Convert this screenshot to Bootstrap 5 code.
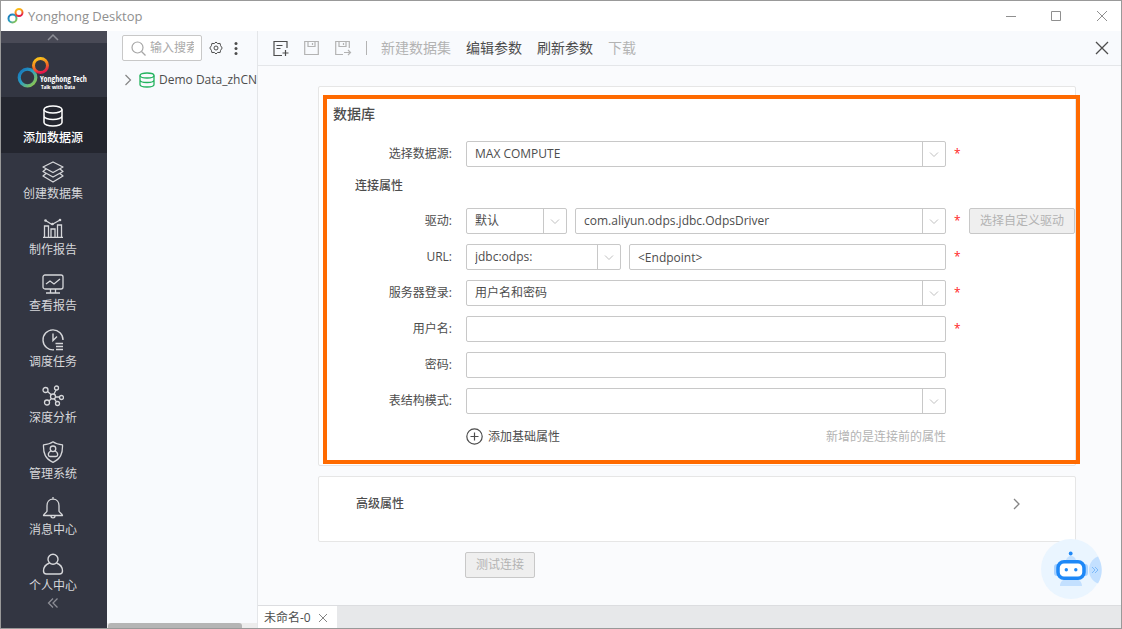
<!DOCTYPE html>
<html lang="zh-CN">
<head>
<meta charset="utf-8">
<meta name="viewport" content="width=device-width, initial-scale=1">
<title>Yonghong Desktop</title>
<link href="https://cdn.jsdelivr.net/npm/bootstrap@5.3.0/dist/css/bootstrap.min.css" rel="stylesheet">
<style>
  body { font-family: "Open Sans", "Noto Sans CJK SC", sans-serif; font-size: 12px; line-height: 20px; color: #4d4d4d; }
  svg { fill: none; stroke: currentColor; flex-shrink: 0; display: block; }
  button { font: inherit; }
  .icon-btn { border: 0; background: none; padding: 0; color: inherit; }
  .tone-gray { color: #858585; }
  .tone-green { color: #22b35e; }
  .app { border: 1px solid #999; background: #fff; }
  .titlebar { height: 30px; padding: 0 13px 0 6px; color: #8f8f8f; font-size: 13px; }
  .win-btns { gap: 33px; }

  .side { width: 106px; background: #333642; color: #d6d7da; }
  .side-up { height: 12px; background: #494a56; color: #8d8e96; padding-right: 2px; }
  .brand { height: 54px; }
  .side .nav-link { height: 56px; padding: 8px 2px 0 0; gap: 1px; color: inherit; border-radius: 0; }
  .side .nav-link.active { background: #24262f; color: #fff; font-weight: 500; }
  .side-down { color: #8d8e96; margin: -4px 2px 0 0; }

  .tree { width: 151px; background: #f8fafd; border-right: 1px solid #e4e6e9; }
  .tree-tools { padding: 4px 0 0 15px; gap: 7px; color: #4d4d4d; }
  .search { width: 80px; height: 26px; border: 1px solid #c8c8c8; border-radius: 2px; padding: 0 7px 0 8px; gap: 4px; color: #a6a6a6; background: #fff; }
  .search input { font-size: 12px; color: #4d4d4d; min-width: 0; }
  .search input::placeholder { color: #a9a9a9; opacity: 1; }
  .tree-node { padding: 9px 0 0 15px; white-space: nowrap; }
  .hscroll { height: 5px; background: #ececec; padding-left: 1px; }
  .hthumb { width: 90%; height: 5px; background: #b5b5b5; border-radius: 3px 3px 0 0; }

  .work { background: #fafbfd; }
  .toolbar { height: 35px; background: #f8fafd; border-bottom: 1px solid #e4e6e9; padding: 0 12px 0 14px; font-size: 14px; }
  .toolbar .off { color: #b3b3b3; }
  .tools-icons { gap: 15px; }
  .tools-text { gap: 15px; }
  .panes { padding: 20px 45px 0 60px; }
  .panel { background: #fff; border: 1px solid #e6e6e6; border-radius: 2px; }
  .db-panel { height: 380px; padding-top: 17px; }
  .frame { inset: 8px -5px 1px 4px; border: 4px solid #ff6a00; pointer-events: none; }
  .sec-title { font-size: 14px; font-weight: 500; margin: 0 0 17px 14px; line-height: 20px; }
  .sub-title { font-size: 12px; font-weight: 500; margin: 0 0 13px 36px; line-height: 18px; }
  .f-row { height: 26px; margin-bottom: 10px; }
  .f-label { width: 133px; margin-right: 14px; text-align: right; flex-shrink: 0; }
  .f-after { width: 129px; padding-left: 8px; flex-shrink: 0; gap: 8px; }
  .star { color: #f22; width: 7px; }
  .form-control, .form-select { height: 26px; min-height: 26px; padding: 0 8px; font-size: 12px; line-height: 24px; color: #4d4d4d; border: 1px solid #c8c8c8; border-radius: 2px; min-width: 0; }
  .form-select { padding-right: 26px; background-image: url("data:image/svg+xml,%3Csvg xmlns='http://www.w3.org/2000/svg' width='23' height='24' fill='none'%3E%3Cpath d='M.5 0v24' stroke='%23c8c8c8'/%3E%3Cpath d='M8 10.500l4 4 4-4' stroke='%23c0c0c0'/%3E%3C/svg%3E"); background-size: 23px 24px; background-position: right 0 center; }
  .w-drv { width: 101px; flex-shrink: 0; }
  .w-url { width: 155px; flex-shrink: 0; }
  .btn-off { height: 26px; border: 1px solid #c8c8c8; border-radius: 2px; background: #efefef; color: #b3b3b3; padding: 0 10px; white-space: nowrap; line-height: 24px; font-size: 12px; }
  .hint { color: #b3b3b3; }
  .adv { height: 66px; margin-top: 10px; padding: 0 53px 10px 37px; font-weight: 500; width: 100%; color: #4d4d4d; }
  .test-row { padding: 10px 0 0 147px; }
  .tabs { height: 23px; background: #e7e8ea; border-top: 1px solid #dcdde0; }
  .doc-tab { background: #fff; padding: 2px 9px 0 6px; gap: 7px; }
  .bot { right: 19px; bottom: 29px; }
  .bot svg { stroke: none; }
</style>
</head>
<body>
<svg width="0" height="0" class="position-absolute" aria-hidden="true">
  <defs>
    <linearGradient id="cool" x1="0" y1="0" x2="1" y2="1"><stop offset="0" stop-color="#1470b8"/><stop offset=".45" stop-color="#2a9fc4"/><stop offset="1" stop-color="#9ccc3c"/></linearGradient>
    <linearGradient id="warm" x1=".3" y1="0" x2=".6" y2="1"><stop offset="0" stop-color="#fbc21a"/><stop offset=".5" stop-color="#f47a20"/><stop offset="1" stop-color="#e4144c"/></linearGradient>
  </defs>
</svg>
<div class="app d-flex flex-column vh-100 overflow-hidden">
  <header class="titlebar d-flex align-items-center justify-content-between">
    <div class="d-flex align-items-center gap-1">
      <svg width="17" height="18" viewBox="0 0 17 18" stroke-width="2"><circle cx="5.500" cy="11.500" r="4" stroke="url(#cool)"/><circle cx="12" cy="5.500" r="3.500" stroke="url(#warm)"/></svg>
      <span>Yonghong Desktop</span>
    </div>
    <div class="win-btns d-flex align-items-center">
      <button class="icon-btn" aria-label="最小化"><svg width="12" height="12"><path d="M0 6.500h10"/></svg></button>
      <button class="icon-btn" aria-label="最大化"><svg width="12" height="12"><path d="M.5 1.500h9v9h-9z"/></svg></button>
      <button class="icon-btn" aria-label="关闭"><svg width="12" height="12"><path d="M1 1l10 10M11 1L1 11"/></svg></button>
    </div>
  </header>

  <div class="d-flex flex-grow-1 overflow-hidden">
    <nav class="side d-flex flex-column flex-shrink-0">
      <button class="side-up icon-btn d-flex justify-content-center align-items-center" aria-label="向上"><svg width="12" height="8" stroke-width="1.500"><path d="M1 7l5-5 5 5"/></svg></button>
      <div class="brand">
        <svg width="106" height="54" viewBox="0 0 106 54">
          <circle cx="26.500" cy="34.500" r="8.300" stroke="url(#cool)" stroke-width="3.200"/><circle cx="39.500" cy="22.500" r="7" stroke="url(#warm)" stroke-width="3"/>
          <g stroke="none" fill="#fff" font-family="Open Sans Condensed, Liberation Sans Narrow, sans-serif"><text x="39" y="39" font-size="8" font-weight="700">Yonghong Tech</text><text x="40" y="46" font-size="6">Talk with Data</text></g>
        </svg>
      </div>
      <div class="nav flex-column text-center">
        <a href="#" class="nav-link active d-flex flex-column align-items-center"><svg width="22" height="22" stroke-width="1.500"><ellipse cx="11" cy="4.500" rx="9" ry="3.500"/><path d="M2 4.500v13c0 2 4 3.500 9 3.500s9-1.500 9-3.500v-13M2 11c0 2 4 3.500 9 3.500s9-1.500 9-3.500"/></svg>添加数据源</a>
        <a href="#" class="nav-link d-flex flex-column align-items-center"><svg width="22" height="22" stroke-width="1.300" stroke-linejoin="round"><path d="M11 1l10 5-10 5.500L1 6zM4 8l-3 2.500L11 16l10-5.500L18 8M4 12.500L1 15l10 6 10-6-3-2.500"/></svg>创建数据集</a>
        <a href="#" class="nav-link d-flex flex-column align-items-center"><svg width="22" height="22" stroke-width="1.300"><path d="M1 20.300h20M2.500 20v-11h4v11M9 20v-8h4v8M15.500 20V8h4v12M3.500 3.500L10 7.500l8-4.500"/><g fill="currentColor" stroke="none"><circle cx="3.500" cy="3.500" r="1.300"/><circle cx="10.500" cy="7" r="1.300"/><circle cx="18" cy="3" r="1.300"/></g></svg>制作报告</a>
        <a href="#" class="nav-link d-flex flex-column align-items-center"><svg width="22" height="22" stroke-width="1.300"><rect x="1" y="2" width="20" height="14" rx="2"/><path d="M4 11l4-3 4 3 6-5M8.500 16v3.500M13.500 16v3.500M4 20h14"/></svg>查看报告</a>
        <a href="#" class="nav-link d-flex flex-column align-items-center"><svg width="22" height="22" stroke-width="1.400"><path d="M12 20.800A10 10 0 1 1 21 11M11 4.500v7l4-4M13.500 14.500H21M14 17.500h7M14 20.500h7"/></svg>调度任务</a>
        <a href="#" class="nav-link d-flex flex-column align-items-center"><svg width="22" height="22" stroke-width="1.300"><circle cx="11" cy="11.500" r="2.500"/><circle cx="3.500" cy="5" r="2.500"/><circle cx="14.500" cy="3" r="2"/><circle cx="19.500" cy="12.500" r="2"/><circle cx="5" cy="17.500" r="2.500"/><circle cx="15.500" cy="18.500" r="2"/><path d="M5.500 6.500l3.500 3M14 5l-2 4M13.500 12h4M9.500 13.500L7 16M12 13.500l2.500 3.300"/></svg>深度分析</a>
        <a href="#" class="nav-link d-flex flex-column align-items-center"><svg width="22" height="22" stroke-width="1.300" stroke-linejoin="round"><path d="M11 .8c3 2.200 6 2.700 9.500 3 .3 9-2 14-9.500 17.500C3.500 17.800 1.200 12.800 1.500 3.800 5 3.500 8 3 11 .8z"/><circle cx="11" cy="7.800" r="2.800"/><path d="M9 10c-2 .7-2.700 2-2.700 3.700 0 1.200.7 1.800 1.700 1.800h6c1 0 1.700-.6 1.700-1.800 0-1.700-.7-3-2.700-3.700"/></svg>管理系统</a>
        <a href="#" class="nav-link d-flex flex-column align-items-center"><svg width="22" height="22" stroke-width="1.300" stroke-linejoin="round"><path d="M11 2.200c4 0 6 3 6 6.500v5.500c1 2 3 2.300 3.500 4.300h-19c.5-2 2.500-2.300 3.500-4.300V8.700c0-3.500 2-6.500 6-6.500zM11 0v2.200M9 19c0 2.500 4 2.500 4 0"/></svg>消息中心</a>
        <a href="#" class="nav-link d-flex flex-column align-items-center"><svg width="22" height="22" stroke-width="1.400"><circle cx="11" cy="6.200" r="5"/><path d="M7.500 10c-4 1.500-6 4-6 8 0 2 1 3 3 3h13c2 0 3-1 3-3 0-4-2-6.500-6-8"/></svg>个人中心</a>
      </div>
      <button class="side-down icon-btn align-self-center" aria-label="收起"><svg width="12" height="12" viewBox="0 0 12 12" stroke-width="1.300"><path d="M6 1.500L1.500 6 6 10.500M10.500 1.500L6 6l4.500 4.500"/></svg></button>
    </nav>

    <aside class="tree d-flex flex-column flex-shrink-0">
      <div class="tree-tools d-flex align-items-center">
        <label class="search d-flex align-items-center"><svg width="15" height="15" stroke-width="1.200"><circle cx="6.500" cy="6.500" r="5.500"/><path d="M10.500 10.500l4 4"/></svg><input class="border-0 p-0 w-100 bg-transparent" type="text" placeholder="输入搜索" aria-label="输入搜索"></label>
        <button class="icon-btn" aria-label="设置"><svg width="14" height="14" viewBox="0 0 14 14" stroke-linejoin="round"><path d="M5.300 2.600L7 1l1.700 1.600 2.400-.2.500 2.300L13.200 7l-1.600 2.300-.5 2.300-2.400-.2L7 13l-1.700-1.600-2.400.2-.5-2.300L.8 7l1.600-2.300.5-2.300z"/><circle cx="7" cy="7" r="2"/></svg></button>
        <button class="icon-btn" aria-label="更多"><svg width="12" height="14"><g fill="currentColor" stroke="none"><circle cx="6" cy="2.500" r="1.500"/><circle cx="6" cy="7.500" r="1.500"/><circle cx="6" cy="12.500" r="1.500"/></g></svg></button>
      </div>
      <div class="tree-node d-flex align-items-center">
        <svg class="tone-gray me-1" width="13" height="12" stroke-width="1.200"><path d="M3.500 1l5 5-5 5"/></svg>
        <svg class="tone-green me-1" width="16" height="16" stroke-width="1.300"><ellipse cx="8" cy="3.500" rx="7" ry="2.500"/><path d="M1 3.500v9C1 14 4 15 8 15s7-1 7-2.500v-9M1 8c0 1.500 3 2.500 7 2.500s7-1 7-2.500"/></svg>
        <span>Demo Data_zhCN</span>
      </div>
      <div class="hscroll mt-auto"><div class="hthumb"></div></div>
    </aside>

    <main class="work d-flex flex-column flex-grow-1 position-relative">
      <div class="toolbar d-flex align-items-center flex-shrink-0">
        <div class="tools-icons d-flex align-items-center">
          <button class="icon-btn" aria-label="新建"><svg width="17" height="17" stroke-width="1.200"><path d="M15 8V1.500H2v14h8M4.500 5.500h6M4.500 8.500h4M13.500 10v6M10.500 13h6"/></svg></button>
          <button class="icon-btn off" aria-label="保存"><svg width="16" height="16" stroke-width="1.200"><path d="M.7 1.500h13.600v13H.7zM4 1.500v5h7v-5M8.500 3v2"/></svg></button>
          <button class="icon-btn off" aria-label="另存为"><svg width="17" height="16" stroke-width="1.200"><path d="M14.300 8V1.500H.7v13H8M4 1.500v5h7v-5M8.500 3v2M9 12.500h6.500M13 10l2.500 2.500L13 15"/></svg></button>
        </div>
        <svg class="off" width="29" height="14"><path d="M14.500 0v14"/></svg>
        <div class="tools-text d-flex">
          <button class="icon-btn off" disabled>新建数据集</button><button class="icon-btn">编辑参数</button><button class="icon-btn">刷新参数</button><button class="icon-btn off" disabled>下载</button>
        </div>
        <button class="icon-btn ms-auto" aria-label="关闭页面"><svg width="14" height="14" stroke-width="1.300"><path d="M1 1l12 12M13 1L1 13"/></svg></button>
      </div>

      <div class="panes flex-grow-1">
        <form class="panel db-panel position-relative">
          <h2 class="sec-title">数据库</h2>
          <div class="f-row d-flex align-items-center">
            <label class="f-label" for="src">选择数据源:</label>
            <select id="src" class="form-select flex-fill"><option>MAX COMPUTE</option></select>
            <div class="f-after"><span class="star">*</span></div>
          </div>
          <h3 class="sub-title">连接属性</h3>
          <div class="f-row d-flex align-items-center">
            <label class="f-label" for="drv">驱动:</label>
            <div class="d-flex gap-2 flex-fill"><select id="drv" class="form-select w-drv"><option>默认</option></select><select class="form-select" aria-label="驱动类"><option>com.aliyun.odps.jdbc.OdpsDriver</option></select></div>
            <div class="f-after d-flex align-items-center"><span class="star">*</span><button type="button" class="btn-off" disabled>选择自定义驱动</button></div>
          </div>
          <div class="f-row d-flex align-items-center">
            <label class="f-label" for="url">URL:</label>
            <div class="d-flex gap-2 flex-fill"><select id="url" class="form-select w-url"><option>jdbc:odps:</option></select><input type="text" class="form-control" value="&lt;Endpoint&gt;" aria-label="URL 地址"></div>
            <div class="f-after"><span class="star">*</span></div>
          </div>
          <div class="f-row d-flex align-items-center">
            <label class="f-label" for="login">服务器登录:</label>
            <select id="login" class="form-select flex-fill"><option>用户名和密码</option></select>
            <div class="f-after"><span class="star">*</span></div>
          </div>
          <div class="f-row d-flex align-items-center">
            <label class="f-label" for="user">用户名:</label>
            <input id="user" type="text" class="form-control flex-fill">
            <div class="f-after"><span class="star">*</span></div>
          </div>
          <div class="f-row d-flex align-items-center">
            <label class="f-label" for="pwd">密码:</label>
            <input id="pwd" type="password" class="form-control flex-fill">
            <div class="f-after"></div>
          </div>
          <div class="f-row d-flex align-items-center">
            <label class="f-label" for="schema">表结构模式:</label>
            <select id="schema" class="form-select flex-fill"><option></option></select>
            <div class="f-after"></div>
          </div>
          <div class="f-row d-flex align-items-center">
            <div class="f-label"></div>
            <div class="d-flex flex-fill justify-content-between align-items-center">
              <button type="button" class="icon-btn d-flex align-items-center"><svg class="me-1" width="18" height="18" stroke-width="1.200"><circle cx="8.500" cy="8.500" r="7.700"/><path d="M4.500 8.500h8M8.500 4.500v8"/></svg>添加基础属性</button>
              <span class="hint">新增的是连接前的属性</span>
            </div>
            <div class="f-after"></div>
          </div>
          <div class="frame position-absolute"></div>
        </form>

        <button class="panel adv d-flex align-items-center justify-content-between">高级属性<svg class="tone-gray" width="10" height="12" stroke-width="1.300"><path d="M2 1l5 5-5 5"/></svg></button>
        <div class="test-row"><button class="btn-off" disabled>测试连接</button></div>
      </div>

      <div class="tabs d-flex flex-shrink-0">
        <div class="doc-tab d-flex align-items-center"><span>未命名-0</span><button class="icon-btn tone-gray" aria-label="关闭标签"><svg width="10" height="10"><path d="M1 1l8 8M9 1L1 9"/></svg></button></div>
      </div>
      <button class="bot icon-btn position-absolute" aria-label="智能助手">
        <svg width="61" height="60" viewBox="0 0 61 60">
          <circle cx="30" cy="30" r="30" fill="#eaf5ff"/>
          <path d="M57 17.500C51 20 48 25 48 31s3 11 9 13.500c5-9 5-18 0-27z" fill="#c3e0ff"/>
          <path d="M25 22a5 5 0 0 1 10 0M19 47c0-4 3-7 6-7h10c3 0 6 3 6 7z" fill="#c3e0ff"/>
          <rect x="13" y="25" width="34" height="12" rx="3" fill="#a9d2ff"/>
          <rect x="17" y="22.700" width="26" height="16.500" rx="6" fill="#fff" stroke="#1e88f7" stroke-width="3.500"/>
          <g fill="#1e88f7"><circle cx="29.700" cy="14.500" r="1.900"/><circle cx="25.300" cy="30.800" r="1.700"/><circle cx="34.800" cy="30.800" r="1.700"/></g>
          <path d="M51 28l3 3-3 3M54 28l3 3-3 3" stroke="#7dbbfa" fill="none"/>
        </svg>
      </button>
    </main>
  </div>
</div>
<script src="https://cdn.jsdelivr.net/npm/bootstrap@5.3.0/dist/js/bootstrap.bundle.min.js"></script>
</body>
</html>
